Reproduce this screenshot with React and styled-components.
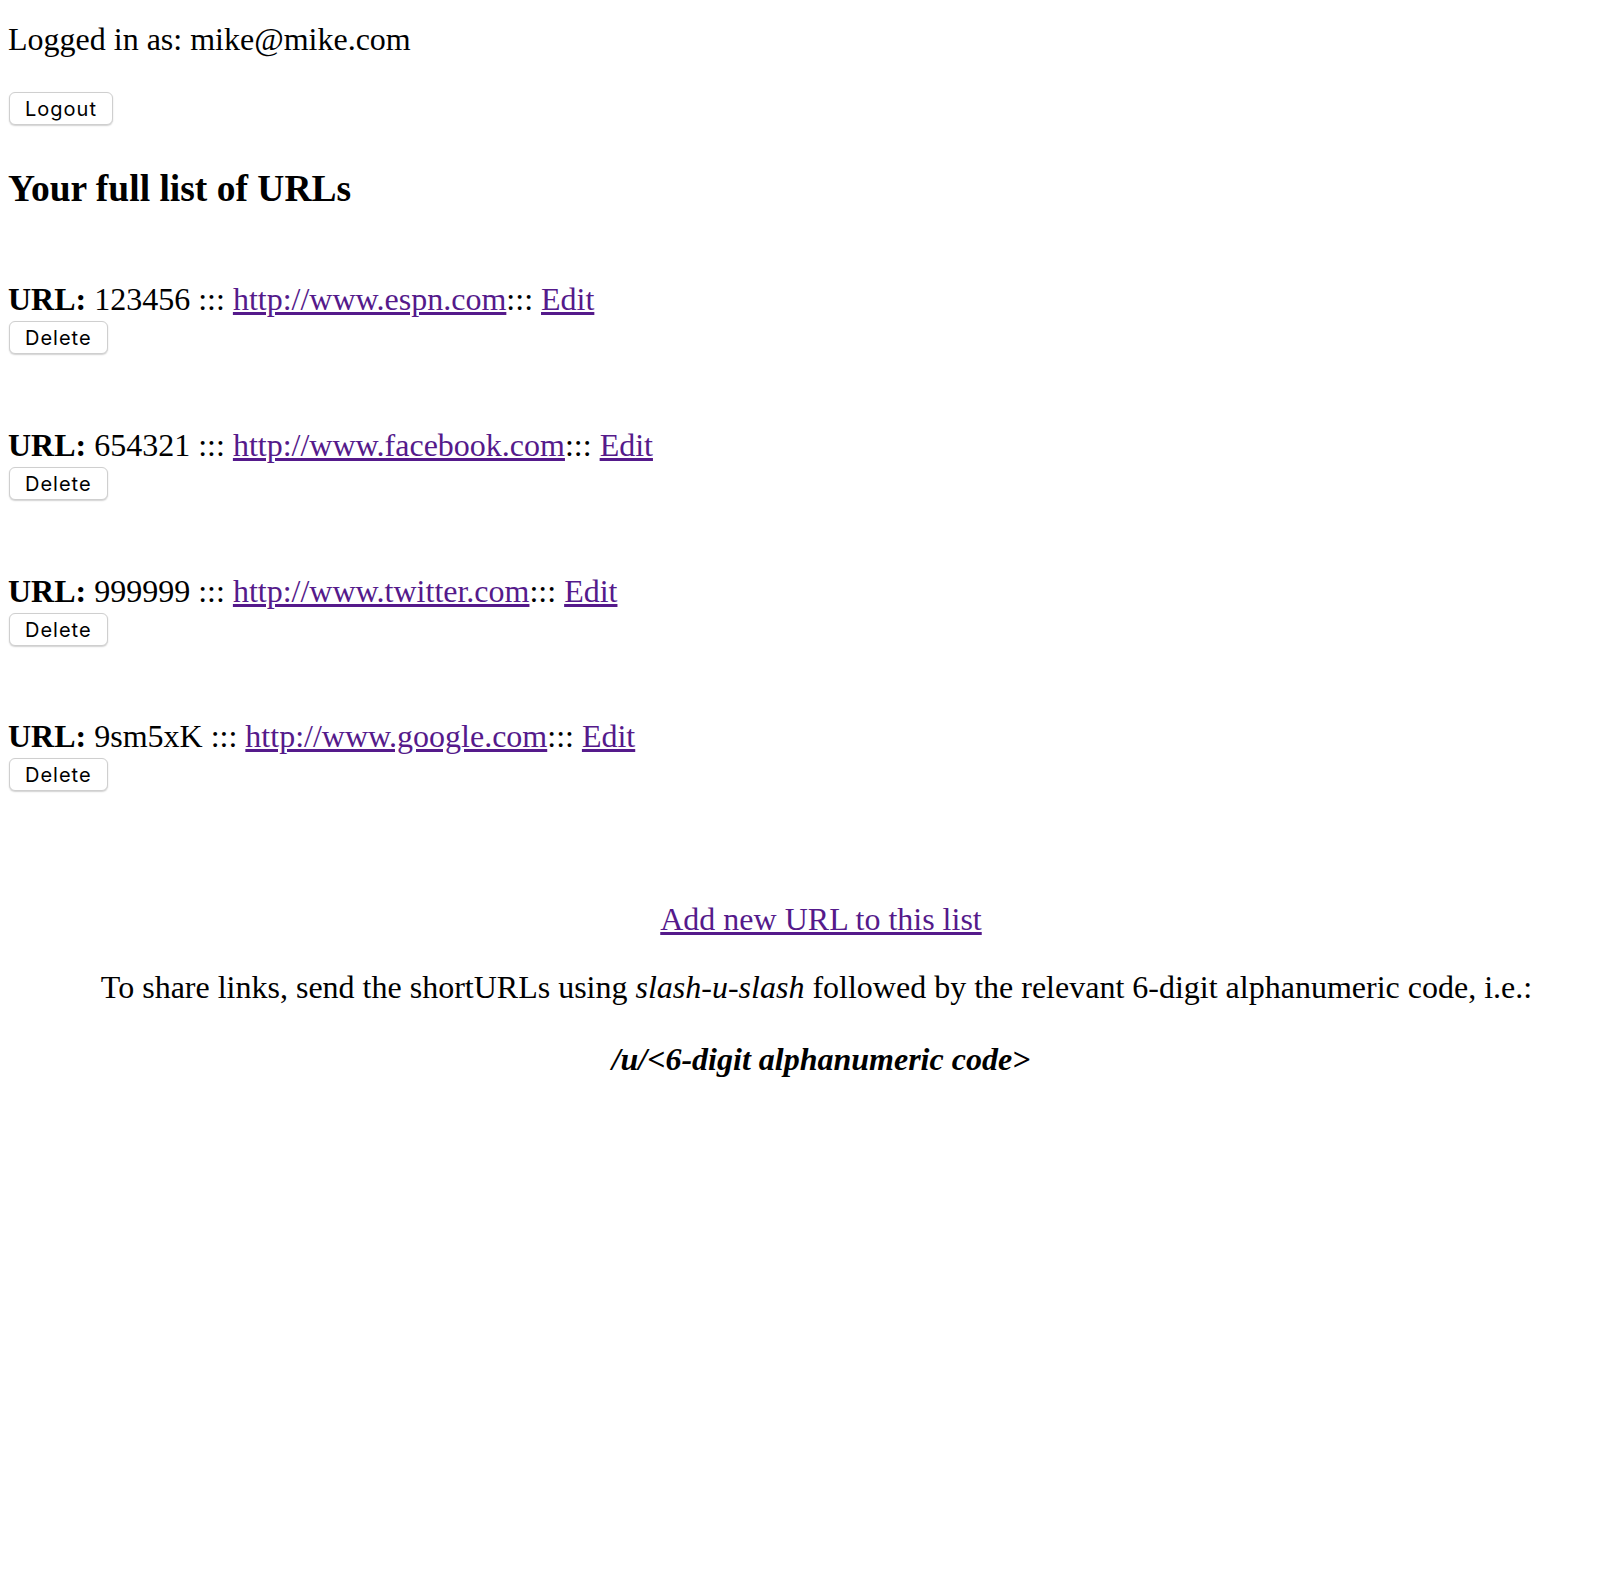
import React from 'react';
import styled, { createGlobalStyle } from 'styled-components';

const GlobalStyle = createGlobalStyle`
    body {
        margin: 0;
        background: #fff;
        color: #000;
        font-family: "Liberation Serif", "Times New Roman", serif;
        font-size: 32px;
    }
`;

const urls = [
    { code: '123456', long: 'http://www.espn.com' },
    { code: '654321', long: 'http://www.facebook.com' },
    { code: '999999', long: 'http://www.twitter.com' },
    { code: '9sm5xK', long: 'http://www.google.com' },
];

function App() {
    return (
        <StPage>
            <GlobalStyle />
            <StGreeting>Logged in as: mike@mike.com</StGreeting>
            <StButton type="button">Logout</StButton>
            <StTitle>Your full list of URLs</StTitle>

            <StList>
                {urls.map((url) => (
                    <StRow key={url.code}>
                        <StLine>
                            <b>URL:</b> {url.code} ::: <StLink href="#">{url.long}</StLink>::: <StLink href="#">Edit</StLink>
                        </StLine>
                        <StButton type="button" $small>Delete</StButton>
                    </StRow>
                ))}
            </StList>

            <StFooter>
                <StLink href="#">Add new URL to this list</StLink>
                <StNote>
                    To share links, send the shortURLs using <i>slash-u-slash</i> followed by the relevant 6-digit alphanumeric code, i.e.:
                </StNote>
                <StCode>/u/&lt;6-digit alphanumeric code&gt;</StCode>
            </StFooter>
        </StPage>
    );
}

export default App;

const StPage = styled.div`
    display: flex;
    flex-direction: column;
    align-items: flex-start;
    padding: 21px 8px 60px 8px;
    min-height: 1500px;
`;
const StGreeting = styled.p`
    margin: 0;
    line-height: 37px;
`;
const StButton = styled.button`
    margin-top: ${(p) => (p.$small ? '3px' : '34px')};
    margin-left: 1px;
    height: 33px;
    padding: 1px 15px 0 15px;
    background: #fff;
    border: 1px solid #cfcfcf;
    border-radius: 6px;
    box-shadow: 0 1px 1.5px rgba(0, 0, 0, 0.18);
    font-family: Inter, "Liberation Sans", sans-serif;
    font-size: 20px;
    letter-spacing: 1px;
    color: #000;
    cursor: pointer;
`;
const StTitle = styled.h2`
    margin: 41px 0 0 0;
    font-size: 37.5px;
    font-weight: bold;
    line-height: 46px;
`;
const StList = styled.div`
    display: flex;
    flex-direction: column;
    gap: 72.8px;
    margin-top: 69px;
`;
const StRow = styled.div`
    display: flex;
    flex-direction: column;
    align-items: flex-start;
`;
const StLine = styled.div`
    line-height: 37px;
`;
const StLink = styled.a`
    color: #551a8b;
    text-decoration: underline;
`;
const StFooter = styled.div`
    align-self: stretch;
    display: flex;
    flex-direction: column;
    align-items: center;
    text-align: center;
    margin-top: 110px;
    padding-left: 22px;
    line-height: 37px;
`;
const StNote = styled.p`
    margin: 31px 0 0 0;
    padding-right: 9px;
`;
const StCode = styled.p`
    margin: 35px 0 0 0;
    font-weight: bold;
    font-style: italic;
`;
